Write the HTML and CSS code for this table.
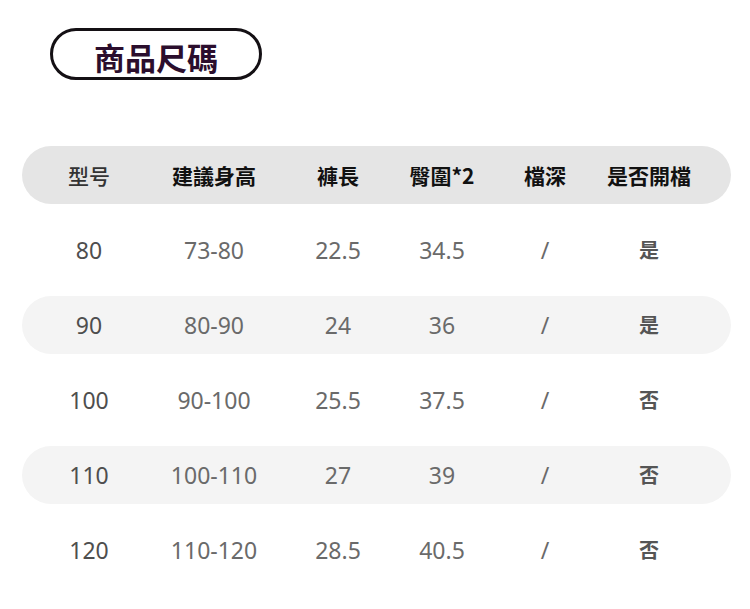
FILE: index.html
```html
<!DOCTYPE html>
<html lang="zh-Hant">
<head>
<meta charset="utf-8">
<title>商品尺碼</title>
<link rel="stylesheet" href="styles.css">
</head>
<body>
<div class="page">
  <div class="title">商品尺碼</div>
  <div class="table">
    <div class="row head">
      <span class="h-first">型号</span>
      <span>建議身高</span>
      <span>褲長</span>
      <span>臀圍*2</span>
      <span>檔深</span>
      <span>是否開檔</span>
    </div>
    <div class="row">
      <span class="c-size">80</span><span>73-80</span><span>22.5</span><span>34.5</span><span>/</span><span class="c-yn">是</span>
    </div>
    <div class="row alt">
      <span class="c-size">90</span><span>80-90</span><span>24</span><span>36</span><span>/</span><span class="c-yn">是</span>
    </div>
    <div class="row">
      <span class="c-size">100</span><span>90-100</span><span>25.5</span><span>37.5</span><span>/</span><span class="c-yn">否</span>
    </div>
    <div class="row alt">
      <span class="c-size">110</span><span>100-110</span><span>27</span><span>39</span><span>/</span><span class="c-yn">否</span>
    </div>
    <div class="row">
      <span class="c-size">120</span><span>110-120</span><span>28.5</span><span>40.5</span><span>/</span><span class="c-yn">否</span>
    </div>
  </div>
</div>
</body>
</html>
```

FILE: styles.css
```css
html, body {
  margin: 0;
  background: #ffffff;
}

.page {
  padding: 28px 19px 0 22px;
  font-family: "Noto Sans", "Noto Sans CJK TC", sans-serif;
}

.title {
  box-sizing: border-box;
  margin-left: 28px;
  width: 212px;
  height: 52px;
  border: 3px solid #141014;
  border-radius: 26px;
  display: flex;
  align-items: center;
  justify-content: center;
  padding-top: 5px;
  font-family: "Noto Sans CJK TC", sans-serif;
  font-size: 31px;
  font-weight: 700;
  line-height: 1;
  color: #2b0e2d;
}

.table {
  margin-top: 66px;
  display: flex;
  flex-direction: column;
  gap: 17px;
}

.row {
  display: grid;
  grid-template-columns: 124px 126px 122px 86px 120px 88px;
  justify-items: center;
  align-items: center;
  padding-left: 5px;
  height: 58px;
  border-radius: 29px;
  font-size: 23px;
  line-height: 1;
  color: #6a6a6a;
}

.row span {
  white-space: nowrap;
}

.row.alt {
  background: #f4f4f4;
}

.row.head {
  background: #e5e5e5;
  font-family: "Noto Sans CJK TC", sans-serif;
  font-size: 21px;
  font-weight: 700;
  color: #111111;
}

.row.head .h-first {
  font-weight: 500;
  color: #333333;
}

.c-size {
  color: #4e4e4e;
}

.c-yn {
  font-family: "Noto Sans CJK TC", sans-serif;
  font-size: 20px;
  font-weight: 700;
  color: #555555;
}
```
